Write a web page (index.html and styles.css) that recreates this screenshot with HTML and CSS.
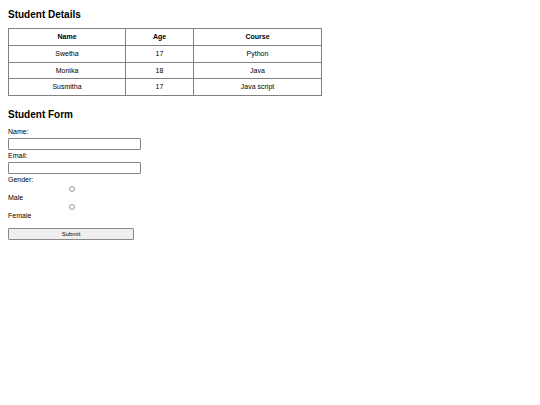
FILE: index.html
```html
<!DOCTYPE html>
<html>
<head>
<meta charset="utf-8">
<title>Student Details</title>
<link rel="stylesheet" href="styles.css">
</head>
<body>
<h2 class="title">Student Details</h2>
<table class="students">
  <thead>
    <tr><th class="c-name">Name</th><th class="c-age">Age</th><th class="c-course">Course</th></tr>
  </thead>
  <tbody>
    <tr><td>Swetha</td><td>17</td><td>Python</td></tr>
    <tr><td>Monika</td><td>18</td><td>Java</td></tr>
    <tr><td>Susmitha</td><td>17</td><td>Java script</td></tr>
  </tbody>
</table>
<h2 class="title form-title">Student Form</h2>
<form class="form">
  <label class="lbl">Name:</label>
  <input class="txt" type="text">
  <label class="lbl">Email:</label>
  <input class="txt" type="text">
  <label class="lbl">Gender:</label>
  <input class="radio" type="radio" name="g">
  <label class="lbl">Male</label>
  <input class="radio" type="radio" name="g">
  <label class="lbl">Female</label>
  <button class="submit" type="button">Submit</button>
</form>
</body>
</html>
```
FILE: styles.css
```css
html, body {
  background: #fff;
}
body {
  margin: 8px;
  font-family: "Liberation Sans", Arial, sans-serif;
  font-size: 7px;
  color: #000;
}
.title {
  font-size: 10px;
  font-weight: bold;
  margin: 0 0 6px;
  line-height: 14px;
}
.form-title {
  margin-top: 12px;
}
.students {
  border-collapse: collapse;
  width: 314px;
  border: 1px solid #808080;
}
.students th, .students td {
  border: 1px solid #808080;
  text-align: center;
  padding: 4px 0;
  line-height: 7.75px;
  font-size: 7px;
}
.students th {
  font-weight: bold;
}
.c-name { width: 116px; }
.c-age { width: 67px; }
.form {
  display: flex;
  flex-direction: column;
  align-items: flex-start;
}
.lbl {
  display: block;
  line-height: 8px;
  height: 8px;
}
.txt {
  display: block;
  box-sizing: border-box;
  width: 133px;
  height: 12px;
  margin: 2px 0;
  border: 1px solid #858585;
  border-radius: 1px;
  padding: 0;
  background: #fff;
}
.radio {
  appearance: none;
  -webkit-appearance: none;
  box-sizing: border-box;
  width: 6px;
  height: 6px;
  border: 1px solid #9a9a9a;
  border-radius: 50%;
  margin: 2px 0 2px 61px;
  padding: 0;
  background: #fff;
}
.submit {
  box-sizing: border-box;
  width: 126px;
  height: 12px;
  margin-top: 8px;
  padding: 0;
  font-family: "Liberation Sans", Arial, sans-serif;
  font-size: 6px;
  color: #000;
  background: #efefef;
  border: 1px solid #8a8a8a;
  border-radius: 1px;
}
```
